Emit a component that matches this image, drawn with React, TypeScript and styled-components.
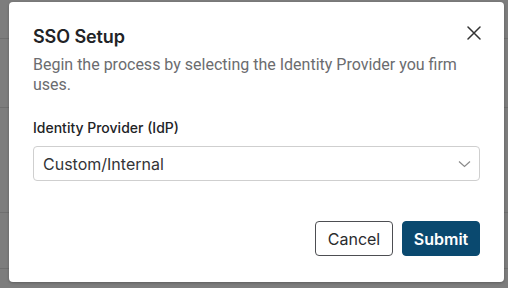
import React from "react";
import styled, { createGlobalStyle } from "styled-components";

const Global = createGlobalStyle`
  html, body { margin: 0; padding: 0; }
  body {
    width: 508px;
    height: 288px;
    overflow: hidden;
    background-color: #7d7d7d;
    background-image:
      linear-gradient(#6f6f6f, #6f6f6f),
      linear-gradient(#6f6f6f, #6f6f6f),
      linear-gradient(#6f6f6f, #6f6f6f),
      linear-gradient(#6f6f6f, #6f6f6f);
    background-repeat: no-repeat;
    background-size: 508px 1px, 508px 1px, 508px 1px, 508px 1px;
    background-position: 0 38px, 0 107px, 0 212px, 0 268px;
  }
`;

const Backdrop = styled.div`
  padding: 2px 4px 0 9px;
`;

const Dialog = styled.div`
  position: relative;
  box-sizing: border-box;
  width: 495px;
  height: 280px;
  background: #ffffff;
  border-radius: 4px;
  box-shadow: 0 1px 3px rgba(0, 0, 0, 0.25);
  padding: 23px 24px 25px 24px;
  display: flex;
  flex-direction: column;
`;

const Title = styled.h2`
  margin: 0;
  font-family: Inter, "Noto Sans", sans-serif;
  font-weight: 600;
  font-size: 18px;
  line-height: 24px;
  color: #222326;
  letter-spacing: -0.1px;
`;

const CloseButton = styled.button`
  position: absolute;
  top: 22px;
  right: 21px;
  width: 18px;
  height: 18px;
  padding: 0;
  border: none;
  background: transparent;
  display: flex;
  align-items: center;
  justify-content: center;
  cursor: pointer;
`;

const Description = styled.p`
  margin: 6px 0 0 0;
  font-family: Roboto, "Noto Sans", sans-serif;
  font-size: 16px;
  line-height: 20px;
  color: #6b6c6f;
`;

const Label = styled.label`
  margin-top: 23px;
  font-family: Inter, "Noto Sans", sans-serif;
  font-weight: 500;
  font-size: 14px;
  line-height: 20px;
  color: #222326;
`;

const SelectBox = styled.div`
  margin-top: 8px;
  box-sizing: border-box;
  height: 35px;
  border: 1px solid #cfcfcf;
  border-radius: 4px;
  display: flex;
  align-items: center;
  justify-content: space-between;
  padding: 0 8px 0 9px;
  font-family: Inter, "Noto Sans", sans-serif;
  font-size: 16px;
  color: #333437;
`;

const Footer = styled.div`
  margin-top: 40px;
  display: flex;
  justify-content: flex-end;
  gap: 9px;
`;

const Button = styled.button<{ $primary?: boolean }>`
  box-sizing: border-box;
  width: 78px;
  height: 35px;
  border-radius: 4px;
  font-family: Inter, "Noto Sans", sans-serif;
  font-size: 16px;
  font-weight: ${(p) => (p.$primary ? 600 : 400)};
  color: ${(p) => (p.$primary ? "#ffffff" : "#2a2b2e")};
  background: ${(p) => (p.$primary ? "#0a496f" : "#ffffff")};
  border: 1px solid ${(p) => (p.$primary ? "#0a496f" : "#4d4e52")};
  padding: 0;
  cursor: pointer;
`;

export default function App() {
  return (
    <>
      <Global />
      <Backdrop>
        <Dialog>
          <Title>SSO Setup</Title>
          <CloseButton aria-label="Close">
            <svg width="14" height="14" viewBox="0 0 14 14">
              <path d="M1 1 L13 13 M13 1 L1 13" stroke="#333" strokeWidth="1.5" strokeLinecap="round" />
            </svg>
          </CloseButton>
          <Description>
            Begin the process by selecting the Identity Provider you firm uses.
          </Description>
          <Label>Identity Provider (IdP)</Label>
          <SelectBox>
            <span>Custom/Internal</span>
            <svg width="13" height="8" viewBox="0 0 13 8">
              <path d="M1 1.5 L6.5 6.5 L12 1.5" stroke="#8a8a8a" strokeWidth="1.2" fill="none" />
            </svg>
          </SelectBox>
          <Footer>
            <Button>Cancel</Button>
            <Button $primary>Submit</Button>
          </Footer>
        </Dialog>
      </Backdrop>
    </>
  );
}
